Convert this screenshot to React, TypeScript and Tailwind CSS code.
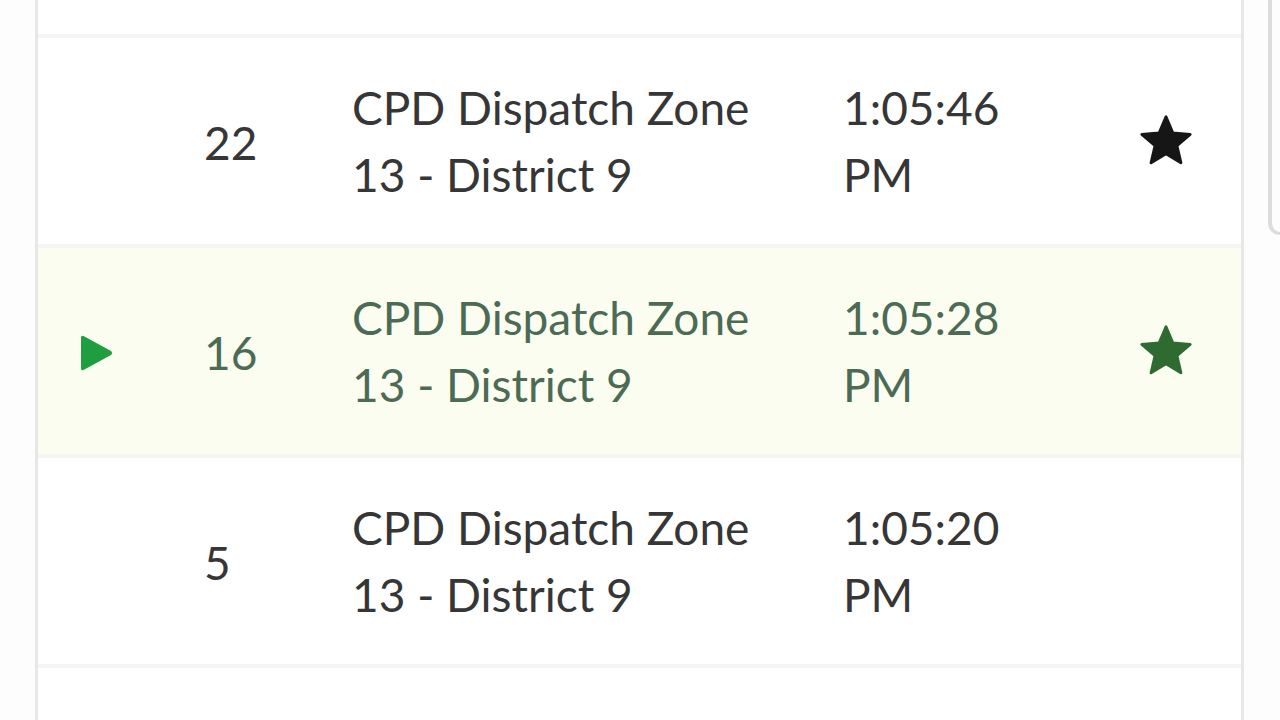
import React from "react";

interface Call {
  id: number;
  talkgroup: string;
  time: string;
  starred: boolean;
  playing: boolean;
}

const calls: Call[] = [
  { id: 22, talkgroup: "CPD Dispatch Zone 13 - District 9", time: "1:05:46 PM", starred: true, playing: false },
  { id: 16, talkgroup: "CPD Dispatch Zone 13 - District 9", time: "1:05:28 PM", starred: true, playing: true },
  { id: 5, talkgroup: "CPD Dispatch Zone 13 - District 9", time: "1:05:20 PM", starred: false, playing: false },
  { id: 3, talkgroup: "CPD Dispatch Zone 13 - District 9", time: "1:05:02 PM", starred: false, playing: false },
];

function Star({ className }: { className: string }) {
  return (
    <svg viewBox="0 0 24 24" className={className} fill="currentColor">
      <path
        d="M12 17.27L18.18 21l-1.64-7.03L22 9.24l-7.19-.61L12 2 9.19 8.63 2 9.24l5.46 4.73L5.82 21z"
        stroke="currentColor"
        strokeWidth="1.2"
        strokeLinejoin="round"
      />
    </svg>
  );
}

function PlayMark() {
  return (
    <svg viewBox="0 0 34 38" className="h-[38px] w-[34px] shrink-0 text-[#1f9e40]" fill="currentColor">
      <path d="M2 4 Q2 0.5 5 2.2 L32 17 Q34 19 32 21 L5 35.8 Q2 37.5 2 34 Z" />
    </svg>
  );
}

function CallRow({ call }: { call: Call }) {
  const text = call.playing ? "text-[#4c6b55]" : "text-[#363636]";
  return (
    <div
      className={`flex h-[210px] shrink-0 items-center border-b-[4px] border-[#f5f5f4] ${
        call.playing ? "bg-[#fbfdf0]" : "bg-white"
      } ${text}`}
    >
      <div className="flex w-[166px] shrink-0 items-center pl-[41px] pt-[4px]">
        {call.playing && <PlayMark />}
      </div>
      <div className="w-[148px] shrink-0 pt-[2px]">{call.id}</div>
      <div className="w-[491px] shrink-0">
        <div className="w-[440px]">{call.talkgroup}</div>
      </div>
      <div className="w-[200px] shrink-0">{call.time}</div>
      <div className="flex flex-1 items-center justify-end pr-[46px]">
        {call.starred && (
          <Star
            className={`h-[58px] w-[58px] ${
              call.playing ? "text-[#2f6a31]" : "text-[#161616]"
            }`}
          />
        )}
      </div>
    </div>
  );
}

export default function App() {
  return (
    <div
      className="flex h-[720px] w-[1280px] overflow-hidden bg-[#fdfdfd] text-[46px] leading-[67px]"
      style={{ fontFamily: "Lato, 'Open Sans', sans-serif" }}
    >
      <div className="w-[35px] shrink-0" />
      <div className="flex w-[1209px] shrink-0 flex-col border-x-[3px] border-[#e7e7e7] bg-white">
        <div className="h-[38px] shrink-0 border-b-[4px] border-[#f5f5f4]" />
        {calls.map((c) => (
          <CallRow key={c.id} call={c} />
        ))}
      </div>
      <div className="flex-1 pl-[24px]">
        <div className="-mt-[10px] h-[245px] rounded-bl-[18px] border-b-[3px] border-l-[4px] border-[#dcdcdc]" />
      </div>
    </div>
  );
}
